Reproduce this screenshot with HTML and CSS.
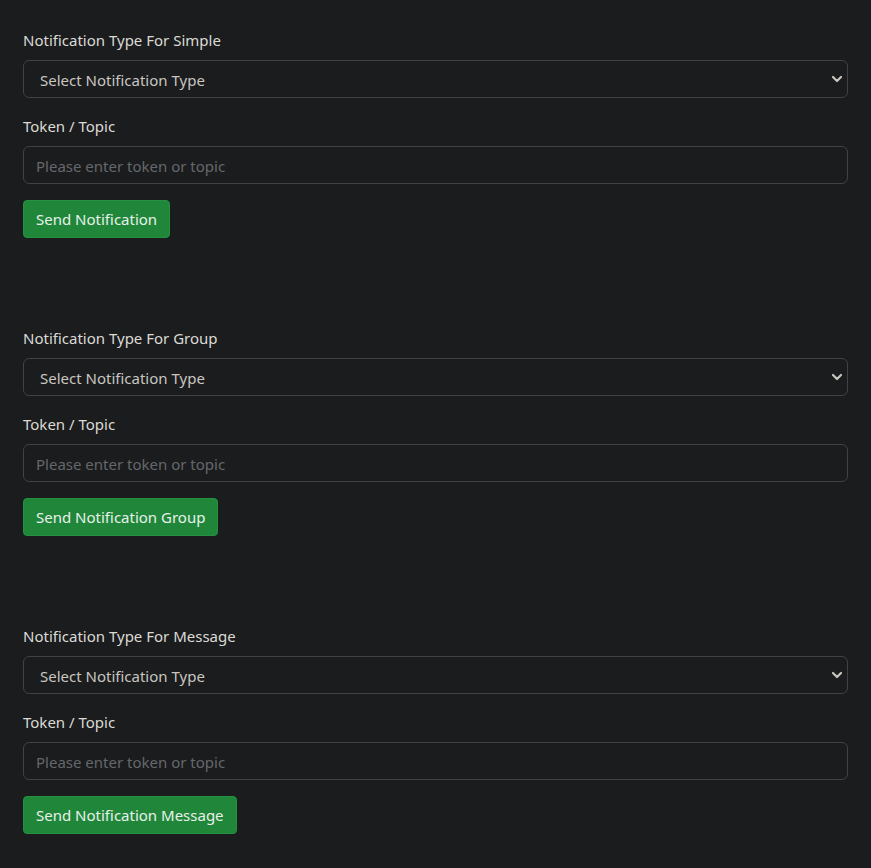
FILE: index.html
```html
<!DOCTYPE html>
<html>
<head>
<meta charset="utf-8">
<link rel="stylesheet" href="styles.css">
</head>
<body>
<main class="page">
  <section class="block">
    <label class="lbl">Notification Type For Simple</label>
    <div class="select"><span class="txt">Select Notification Type</span><svg class="chev" viewBox="0 0 12 8"><path d="M2 2l4 4 4-4" fill="none" stroke="#c9c6c0" stroke-width="2.2" stroke-linecap="round" stroke-linejoin="round"/></svg></div>
    <label class="lbl">Token / Topic</label>
    <div class="input"><span class="txt">Please enter token or topic</span></div>
    <button class="btn">Send Notification</button>
  </section>
  <section class="block">
    <label class="lbl">Notification Type For Group</label>
    <div class="select"><span class="txt">Select Notification Type</span><svg class="chev" viewBox="0 0 12 8"><path d="M2 2l4 4 4-4" fill="none" stroke="#c9c6c0" stroke-width="2.2" stroke-linecap="round" stroke-linejoin="round"/></svg></div>
    <label class="lbl">Token / Topic</label>
    <div class="input"><span class="txt">Please enter token or topic</span></div>
    <button class="btn">Send Notification Group</button>
  </section>
  <section class="block">
    <label class="lbl">Notification Type For Message</label>
    <div class="select"><span class="txt">Select Notification Type</span><svg class="chev" viewBox="0 0 12 8"><path d="M2 2l4 4 4-4" fill="none" stroke="#c9c6c0" stroke-width="2.2" stroke-linecap="round" stroke-linejoin="round"/></svg></div>
    <label class="lbl">Token / Topic</label>
    <div class="input"><span class="txt">Please enter token or topic</span></div>
    <button class="btn">Send Notification Message</button>
  </section>
</main>
</body>
</html>
```
FILE: styles.css
```css
html, body {
  margin: 0;
  background: #1b1c1e;
}
body {
  font-family: "Noto Sans", "Open Sans", sans-serif;
  font-size: 15px;
  color: #dcdad5;
}
.page {
  padding: 28px 23px 0 23px;
  display: flex;
  flex-direction: column;
  gap: 88px;
}
.block {
  display: flex;
  flex-direction: column;
  align-items: flex-start;
}
.lbl {
  display: block;
  line-height: 24px;
  margin-bottom: 8px;
}
.select, .input {
  box-sizing: border-box;
  width: 100%;
  height: 38px;
  border: 1px solid #3f4347;
  border-radius: 6px;
  background: #1b1c1e;
  display: flex;
  align-items: center;
  margin-bottom: 16px;
}
.txt {
  position: relative;
  top: 1px;
}
.select {
  padding: 0 4px 0 16px;
  justify-content: space-between;
  color: #c9c6c0;
}
.input {
  padding: 0 12px;
  color: #65686b;
}
.chev {
  width: 12px;
  height: 8px;
  margin-top: -1px;
}
.btn {
  font: inherit;
  height: 38px;
  padding: 0 12px;
  border: 1px solid #23913f;
  border-radius: 4px;
  background: #20873a;
  color: #e8f1ea;
}
.btn::first-line {
  color: #e8f1ea;
}
```
